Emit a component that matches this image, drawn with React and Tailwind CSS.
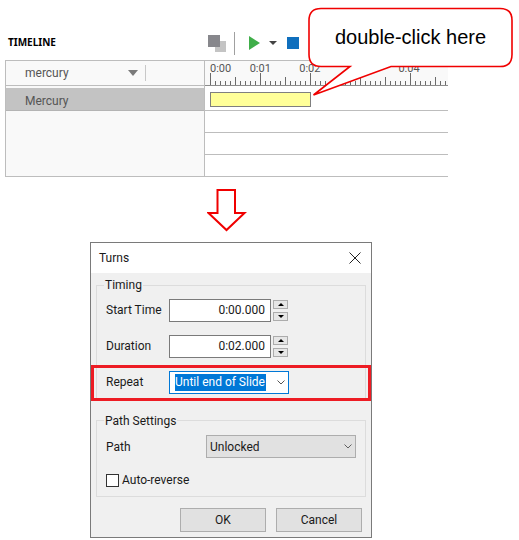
import React from "react";

const rulerLabels = ["0:01", "0:02", "0:03", "0:04"];

function rulerTicks() {
  const ticks = [];
  for (let i = 0; i * 5 <= 238; i++) {
    const x = 5.5 + i * 5;
    const y = i % 10 === 0 ? 0 : i % 5 === 0 ? 4 : 8;
    ticks.push(<line key={i} x1={x} x2={x} y1={y} y2="12" stroke="#6b6b6b" />);
  }
  return ticks;
}

const Chevron = ({ color = "#555555" }) => (
  <svg width="8" height="5" viewBox="0 0 8 5" fill="none">
    <path d="M0.5 0.5 L4 4 L7.5 0.5" stroke={color} />
  </svg>
);

const Spinner = () => (
  <div className="flex flex-col gap-[3px] ml-[2px]">
    <div className="w-[15px] h-[9px] bg-[#e6e6e6] border border-[#acacac] flex items-center justify-center">
      <div className="w-0 h-0 border-x-[3px] border-x-transparent border-b-[3px] border-b-black" />
    </div>
    <div className="w-[15px] h-[9px] bg-[#e6e6e6] border border-[#acacac] flex items-center justify-center">
      <div className="w-0 h-0 border-x-[3px] border-x-transparent border-t-[3px] border-t-black" />
    </div>
  </div>
);

const TimeRow = ({ label, value }) => (
  <div className="flex items-center h-[23px]">
    <div className="w-[63px] pb-[2px]">{label}</div>
    <div className="w-[102px] h-[23px] bg-white border border-[#7a7a7a] flex items-center justify-end pr-[5px] pb-[2px]">
      {value}
    </div>
    <Spinner />
  </div>
);

const Timeline = () => (
  <>
    <div className="flex items-center h-[60px] pt-[24px]">
      <div className="w-[200px] pl-[8px] text-[10px] font-bold text-black font-['Noto_Sans',sans-serif]">TIMELINE</div>
      <div className="flex items-center mt-[2px]">
        <div className="relative w-[18px] h-[17px] ml-[8px]">
          <div className="absolute right-0 bottom-0 w-[11px] h-[11px] bg-[#c4c4c4]" />
          <div className="absolute left-0 top-0 w-[12px] h-[12px] bg-[#87878c]" />
        </div>
        <div className="w-px h-[23px] bg-[#a0a0a0] ml-[8px]" />
        <div className="w-0 h-0 ml-[14px] border-y-[7px] border-y-transparent border-l-[11px] border-l-[#3fae49]" />
        <div className="w-0 h-0 ml-[9px] border-x-[4px] border-x-transparent border-t-[4px] border-t-[#444444]" />
        <div className="w-[12px] h-[12px] ml-[10px] bg-[#0f6fbd]" />
      </div>
    </div>
    <div className="flex ml-[5px] w-[443px] border-t border-l border-[#bdbdbd] text-[#555555]">
      <div className="w-[200px] bg-[#f9f9f9] border-r border-b border-[#bdbdbd]">
        <div className="flex items-center h-[25px] border-b border-[#bdbdbd]">
          <span className="ml-[19px] w-[103px]">mercury</span>
          <div className="w-0 h-0 border-x-[5px] border-x-transparent border-t-[6px] border-t-[#7a7a7a]" />
          <div className="w-px h-[16px] ml-[7px] bg-[#c8c8c8]" />
        </div>
        <div className="mt-[2px] h-[23px] flex items-center pl-[19px] pt-[3px] bg-[#c3c3c3] border-b border-[#b4b4b4]">
          Mercury
        </div>
      </div>
      <div className="w-[243px]">
        <div className="h-[25px] bg-[#f9f9f9] border-b border-[#8c8c8c] overflow-hidden">
          <div className="flex h-[12px] pl-[5px] text-[11px] leading-[12px] pt-[2px] text-[#555555]">
            <span className="w-[40px]">0:00</span>
            {rulerLabels.map((t) => (
              <span key={t} className="w-[50px]">{t}</span>
            ))}
          </div>
          <svg className="block" width="243" height="12">{rulerTicks()}</svg>
        </div>
        <div className="h-[25px] pt-[6px] pl-[5px] border-b border-[#bdbdbd]">
          <div className="w-[101px] h-[15px] bg-[#ffff99] border border-[#7f7f7f]" />
        </div>
        <div className="h-[22px] border-b border-[#bdbdbd]" />
        <div className="h-[22px] border-b border-[#bdbdbd]" />
        <div className="h-[22px] border-b border-[#bdbdbd]" />
      </div>
    </div>
  </>
);

const Callout = () => (
  <div className="absolute left-[305px] top-[5px] w-[212px] h-[95px]">
    <svg className="absolute inset-0" width="212" height="95" fill="none">
      <path
        d="M16 3.5 H195 Q207 3.5 207 15.5 V49.5 Q207 61.5 195 61.5 H86 L8.5 90 L45 61.5 H16 Q4 61.5 4 49.5 V15.5 Q4 3.5 16 3.5 Z"
        fill="white"
        stroke="#f00000"
        strokeWidth="1.6"
      />
    </svg>
    <div className="absolute left-[4px] w-[203px] top-[19px] text-center text-[20px] leading-[26px] text-black font-['Liberation_Sans',sans-serif]">
      double-click here
    </div>
  </div>
);

const DownArrow = () => (
  <svg className="block ml-[207px] mt-[11px]" width="40" height="44" fill="none">
    <path
      d="M10.5 2 H28 V25 H37.5 L19.5 42 L1.5 25 H10.5 Z"
      fill="white"
      stroke="#f00000"
      strokeWidth="2"
    />
  </svg>
);

const Dialog = () => (
  <div className="relative ml-[90px] mt-[10px] w-[282px] border border-[#7a7a7a] bg-[#f0f0f0] text-[#1a1a1a]">
    <div className="h-[30px] bg-white flex items-center justify-between pl-[8px] pr-[10px]">
      <span>Turns</span>
      <svg width="12" height="12" viewBox="0 0 12 12" stroke="#222222" fill="none">
        <path d="M0.5 0.5 L11.5 11.5 M11.5 0.5 L0.5 11.5" />
      </svg>
    </div>
    <fieldset className="mx-[5px] mt-[4px] h-[123px] border border-[#dcdcdc] px-[9px]">
      <legend className="-ml-[2px] px-px leading-[16px]">Timing</legend>
      <div className="flex flex-col gap-[13px] mt-[6px]">
        <TimeRow label="Start Time" value="0:00.000" />
        <TimeRow label="Duration" value="0:02.000" />
        <div className="flex items-center h-[23px]">
          <div className="w-[63px] pb-[2px]">Repeat</div>
          <div className="w-[120px] h-[23px] bg-white border border-[#0078d7] flex items-center pl-[5px]">
            <span className="w-[91px] h-[17px] bg-[#0078d7] text-white leading-[17px] whitespace-nowrap">
              Until end of Slide
            </span>
            <span className="ml-[11px] flex"><Chevron /></span>
          </div>
        </div>
      </div>
    </fieldset>
    <fieldset className="mx-[5px] mt-[11px] h-[86px] border border-[#dcdcdc] px-[9px]">
      <legend className="-ml-[2px] px-px pt-[2px] leading-[16px]">Path Settings</legend>
      <div className="flex items-center h-[23px] mt-[6px]">
        <div className="w-[100px]">Path</div>
        <div className="w-[150px] h-[23px] bg-[#e1e1e1] border border-[#adadad] flex items-center justify-between pl-[3px] pr-[3px]">
          <span>Unlocked</span>
          <Chevron color="#606060" />
        </div>
      </div>
      <label className="flex items-center mt-[13px]">
        <span className="w-[13px] h-[13px] bg-white border border-[#333333]" />
        <span className="ml-[3px]">Auto-reverse</span>
      </label>
    </fieldset>
    <div className="flex justify-end gap-[10px] mt-[11px] mb-[5px] pr-[9px]">
      <button className="w-[86px] h-[24px] bg-[#e1e1e1] border border-[#adadad]">OK</button>
      <button className="w-[86px] h-[24px] bg-[#e1e1e1] border border-[#adadad]">Cancel</button>
    </div>
    {/* red highlight over the Repeat row */}
    <div className="absolute left-0 top-[122px] w-[280px] h-[36px] border-[3px] border-[#ed1c24]" />
  </div>
);

export default function App() {
  return (
    <div className="relative w-[519px] h-[540px] bg-white overflow-hidden text-[12px] font-['Roboto',sans-serif]">
      <Timeline />
      <Callout />
      <DownArrow />
      <Dialog />
    </div>
  );
}
